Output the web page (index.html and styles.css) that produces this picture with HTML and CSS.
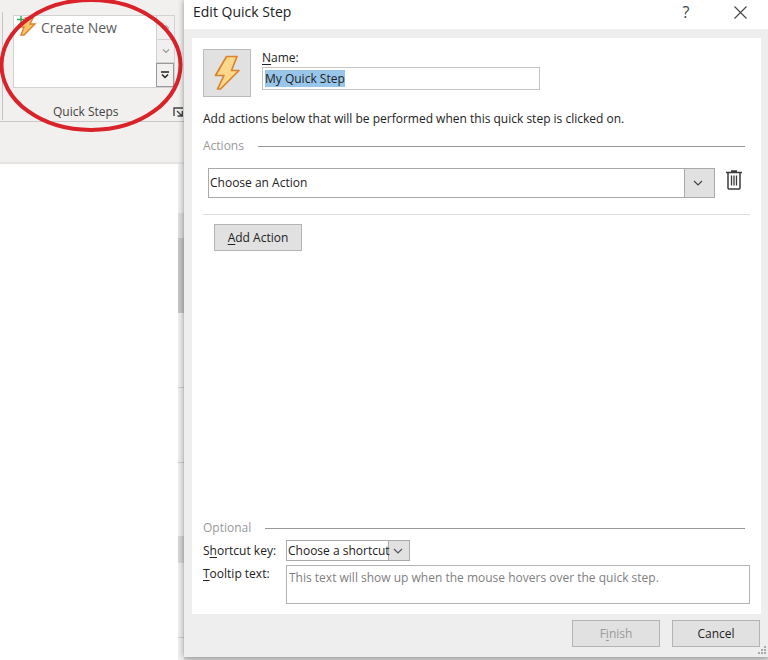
FILE: index.html
```html
<!DOCTYPE html>
<html lang="en">
<head>
<meta charset="utf-8">
<title>Edit Quick Step</title>
<link rel="stylesheet" href="styles.css">
</head>
<body>
<div class="screen">
  <div class="app">
    <section class="ribbon" aria-label="Quick Steps">
      <div class="ribbon-group">
        <div class="gallery">
          <button class="gallery-item" type="button">
            <svg width="20" height="22" viewBox="0 0 20 22" aria-hidden="true">
              <path d="M8 2h8l-3 6h5L7 19H4l3-8H4z" fill="#fbc56c" stroke="#d9822b" stroke-width="1.4"/>
              <path d="M5 0v8M1 4h7" stroke="#fff" stroke-width="3"/>
              <path d="M4 0v7M0 3.500h7" stroke="#3fa05a" stroke-width="1.4"/>
            </svg>
            <span>Create New</span>
          </button>
          <div class="gallery-nav">
            <button type="button" aria-label="Previous row">
              <svg width="10" height="6" viewBox="0 0 10 6"><path d="M2 4.500l3-3 3 3" fill="none" stroke="#aaa" stroke-width="1.200"/></svg>
            </button>
            <button type="button" aria-label="Next row">
              <svg width="10" height="6" viewBox="0 0 10 6"><path d="M2 1.500l3 3 3-3" fill="none" stroke="#999" stroke-width="1.200"/></svg>
            </button>
            <button class="more" type="button" aria-label="More">
              <svg width="10" height="8" viewBox="0 0 10 8"><path d="M1 1h8M2 3.500l3 3 3-3" fill="none" stroke="#222" stroke-width="1.500"/></svg>
            </button>
          </div>
        </div>
        <div class="group-footer">
          <span class="group-name">Quick Steps</span>
          <button class="launcher" type="button" aria-label="Manage Quick Steps">
            <svg width="11" height="10" viewBox="0 0 11 10"><path d="M1 9V1h9M4 4l5 5M9.300 4v5H4.500" fill="none" stroke="#444" stroke-width="1.400"/></svg>
          </button>
        </div>
      </div>
    </section>
    <div class="ribbon-gap"></div>
    <div class="workspace">
      <div class="document"></div>
      <div class="rail">
        <i class="rail-top"></i><i class="rail-thumb"></i><i class="rail-row"></i><i class="rail-row"></i><i class="rail-space"></i><i class="rail-mark"></i><i class="rail-row"></i>
      </div>
    </div>
    <svg class="highlight" width="184" height="134" viewBox="0 0 184 134" aria-hidden="true">
      <ellipse cx="91" cy="65" rx="89.500" ry="65" fill="none" stroke="#d9222a" stroke-width="4"/>
    </svg>
  </div>

  <form class="dialog" role="dialog" aria-labelledby="dialog-title">
    <header class="titlebar">
      <h1 id="dialog-title">Edit Quick Step</h1>
      <button class="help" type="button" aria-label="Help">?</button>
      <button class="close" type="button" aria-label="Close">
        <svg width="13" height="13" viewBox="0 0 13 13"><path d="M.5.5l12 12M12.500.5l-12 12" stroke="#444" stroke-width="1.100"/></svg>
      </button>
    </header>

    <div class="panel">
      <div class="identity">
        <button class="icon-button" type="button" aria-label="Choose icon">
          <svg width="26" height="36" viewBox="0 0 26 36"><path d="M12.500 1.500H23L17.500 15.500h7.500L6.500 34H3.500L10 20.500H1.500z" fill="#fdd88b" stroke="#d98330" stroke-width="1.700" stroke-linejoin="round"/></svg>
        </button>
        <div class="name-field">
          <label for="name"><u>N</u>ame:</label>
          <input id="name" type="text" value="My Quick Step">
        </div>
      </div>

      <p class="intro">Add actions below that will be performed when this quick step is clicked on.</p>

      <h2 class="section">Actions</h2>
      <div class="action-row">
        <div class="picker picker-large">
          <select aria-label="Action"><option>Choose an Action</option></select>
          <svg width="10" height="6" viewBox="0 0 10 6" aria-hidden="true"><path d="M1 1l4 4 4-4" fill="none" stroke="#444" stroke-width="1.200"/></svg>
        </div>
        <button class="trash" type="button" aria-label="Delete action">
          <svg width="16" height="20" viewBox="0 0 16 20" fill="none" stroke="#3b3b3b"><path d="M0 2.500h16M5 1h6" stroke-width="1.500"/><path d="M2 3v15q0 1 1 1h10q1 0 1-1V3" stroke-width="1.500"/><path d="M5.500 5.500v10M8 5.500v10M10.500 5.500v10" stroke-width="1.300"/></svg>
        </button>
      </div>
      <button class="button add" type="button"><span><u>A</u>dd Action</span></button>

      <div class="optional">
        <h2 class="section">Optional</h2>
        <div class="fields">
          <label for="shortcut">S<u>h</u>ortcut key:</label>
          <div class="picker picker-small">
            <select id="shortcut"><option>Choose a shortcut</option></select>
            <svg width="10" height="6" viewBox="0 0 10 6" aria-hidden="true"><path d="M1 1l4 4 4-4" fill="none" stroke="#555" stroke-width="1.200"/></svg>
          </div>
          <label for="tooltip"><u>T</u>ooltip text:</label>
          <textarea id="tooltip" placeholder="This text will show up when the mouse hovers over the quick step."></textarea>
        </div>
      </div>
    </div>

    <footer class="actions">
      <button class="button" type="submit" disabled><span>F<u>i</u>nish</span></button>
      <button class="button" type="button">Cancel</button>
    </footer>
    <svg class="grip" width="9" height="9" viewBox="0 0 9 9" aria-hidden="true"><path d="M6 0h2v2h-2zM6 3h2v2h-2zM3 3h2v2h-2zM6 6h2v2h-2zM3 6h2v2h-2zM0 6h2v2h-2z" fill="#aaa"/></svg>
  </form>
</div>
<script src="script.js"></script>
</body>
</html>
```
FILE: styles.css
```css
* { box-sizing: border-box; }

body {
  margin: 0;
  font: 12px/16px "Open Sans", "Noto Sans", sans-serif;
  color: #222;
  background: #d4d4d4;
}

h1, h2, p { margin: 0; font-weight: 400; }
button, input, select, textarea { font: inherit; color: inherit; }
button { padding: 0; border: 0; background: none; }
svg { display: block; flex: none; }
u { text-underline-offset: 2px; }

.screen {
  display: grid;
  grid-template-columns: 184px 1fr;
  min-height: 100vh;
}

/* Application behind the dialog */
.app {
  position: relative;
  display: flex;
  flex-direction: column;
  background: #f1f0ef;
}

.ribbon {
  padding: 12px 0 1px 2px;
  border-bottom: 1px solid #c9c9c9;
}

.ribbon-group {
  border-left: 1px solid #c4c4c4;
  padding: 3px 0 0 10px;
}

.gallery {
  display: flex;
  width: 162px;
  height: 73px;
  border: 1px solid #d2d2d2;
  background: #fff;
}

.gallery-item {
  display: flex;
  flex: 1;
  align-items: flex-start;
  gap: 4px;
  padding-left: 3px;
  font-size: 14px;
  line-height: 24px;
  color: #5c5c5c;
}

.gallery-nav {
  display: grid;
  grid-template-rows: 1fr 1fr 1fr;
  width: 18px;
  background: #f1f0ef;
}

.gallery-nav button {
  display: grid;
  place-items: center;
  border: 1px solid #d2d2d2;
  border-width: 0 0 1px 1px;
}

.gallery-nav .more { border: 1px solid #999; }

.group-footer {
  display: flex;
  align-items: center;
  padding-top: 16px;
  color: #444;
}

.group-name { flex: 1; padding-left: 40px; }

.ribbon-gap {
  height: 42px;
  border-bottom: 2px solid #e3e2e1;
}

.workspace { display: flex; flex: 1; }
.document { flex: 1; background: #fff; }

.rail {
  display: flex;
  flex-direction: column;
  width: 6px;
  background: #efefef;
}

.rail-top { height: 74px; border-bottom: 25px solid #dedede; }
.rail-thumb { height: 75px; background: #c6c6c6; }
.rail-row { height: 75px; border-bottom: 1px solid #cfcfcf; }
.rail-space { height: 73px; }
.rail-mark { height: 27px; background: #d6d6d6; }

.highlight { position: absolute; top: 0; left: 0; }

/* Dialog */
.dialog {
  position: relative;
  display: flex;
  flex-direction: column;
  margin-bottom: 3px;
  background: #eee;
  box-shadow: 0 0 6px rgba(0, 0, 0, .4);
}

.titlebar {
  display: flex;
  align-items: center;
  height: 29px;
  padding: 0 21px 5px 9px;
  background: #fff;
}

.titlebar h1 { flex: 1; font-size: 14px; line-height: 24px; }
.help { width: 24px; margin-right: 36px; font-size: 16px; line-height: 24px; color: #444; }

.panel {
  display: flex;
  flex: 1;
  flex-direction: column;
  margin: 9px 7px 0 8px;
  padding: 11px 11px 10px;
  background: #fff;
}

.identity { display: flex; gap: 11px; }

.icon-button {
  display: grid;
  place-items: center;
  width: 48px;
  height: 48px;
  border: 1px solid #bbb;
  background: #e1e1e1;
}

.name-field { display: flex; flex-direction: column; padding-top: 1px; gap: 1px; }

.name-field input {
  width: 278px;
  height: 23px;
  padding: 0 2px;
  border: 1px solid #c4c4c4;
  outline: 0;
}

.name-field input::selection { background: #98c6ea; color: #222; }

.intro { margin-top: 14px; }

.section {
  display: flex;
  align-items: center;
  gap: 14px;
  padding-right: 5px;
  font-size: 12px;
  color: #999;
}

.section::after { content: ""; flex: 1; border-top: 1px solid #999; }
.intro + .section { margin-top: 11px; }

.action-row {
  display: flex;
  align-items: flex-start;
  gap: 11px;
  padding: 14px 8px 16px 5px;
  border-bottom: 1px solid #ddd;
}

.trash { padding-top: 2px; }

.picker { display: grid; align-items: center; }
.picker > * { grid-area: 1 / 1; }
.picker svg { justify-self: end; pointer-events: none; }

.picker select {
  appearance: none;
  width: 100%;
  padding: 0 1px;
  border: 1px solid #aaa;
  border-radius: 0;
  color: #222;
}

.picker-large { flex: 1; }
.picker-large select { height: 30px; background: linear-gradient(90deg, #aaa 1px, #e1e1e1 1px) right / 30px 100% no-repeat #fff; }
.picker-large svg { margin-right: 12px; }
.picker-small { width: 124px; }
.picker-small select { height: 21px; background: linear-gradient(90deg, #aaa 1px, #e1e1e1 1px) right / 21px 100% no-repeat #fff; }
.picker-small svg { margin-right: 7px; }

.button {
  width: 88px;
  height: 27px;
  border: 1px solid #b4b4b4;
  background: #e1e1e1;
}

.button:disabled { color: #999; }
.add { margin: 9px 0 0 11px; }

.optional { margin-top: auto; }

.fields {
  display: grid;
  grid-template-columns: 83px 1fr;
  gap: 4px 0;
  padding-top: 4px;
}

.fields label { padding-top: 3px; }
.fields label:last-of-type { padding-top: 1px; }

.fields textarea {
  height: 39px;
  padding: 4px 2px;
  border: 1px solid #b4b4b4;
  outline: 0;
  resize: none;
}

.fields textarea::placeholder { color: #808080; }

.actions {
  display: flex;
  justify-content: flex-end;
  gap: 12px;
  padding: 6px 8px 10px;
}

.grip { position: absolute; right: 1px; bottom: 2px; }
```
FILE: script.js
```js
const nameInput = document.getElementById("name");
nameInput.focus();
nameInput.select();
```
